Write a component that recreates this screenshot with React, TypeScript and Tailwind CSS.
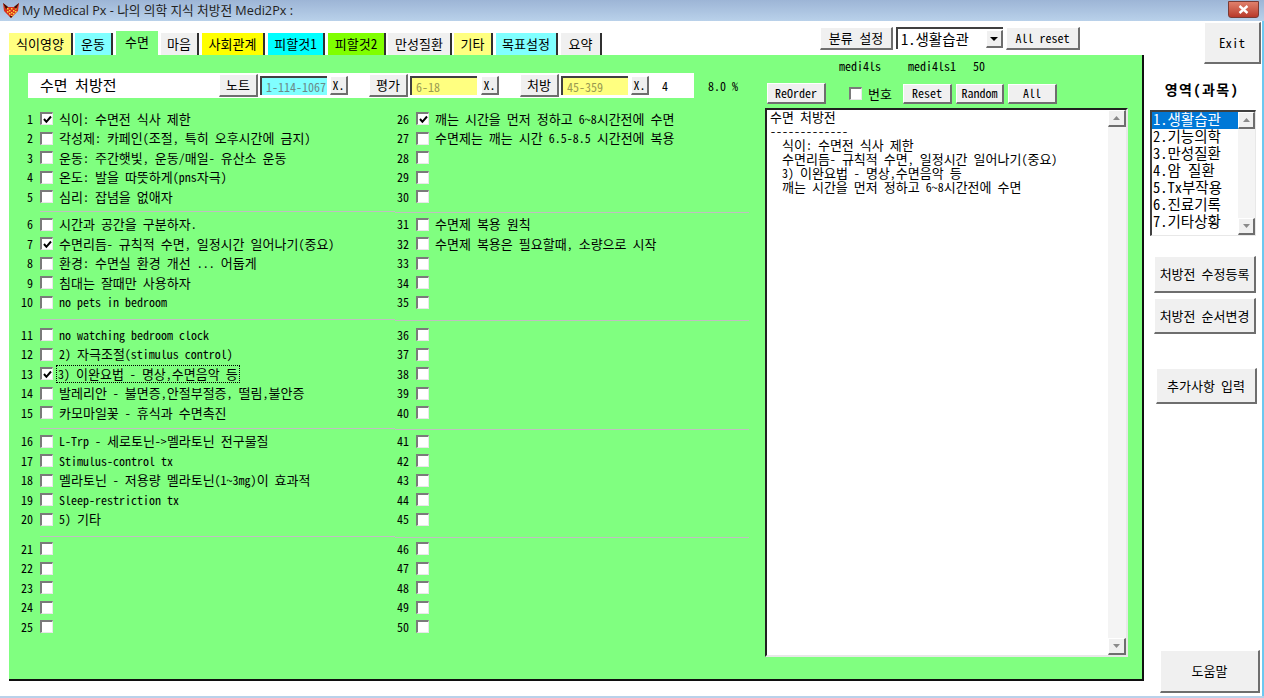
const raisedBtn =
  "flex items-center justify-center bg-[#f0f0f0] border-t border-l border-t-white border-l-white border-r-2 border-b-2 border-r-[#6e6e6e] border-b-[#6e6e6e] text-black";

const tabs = [
  { name: "식이영양", cls: "w-[64px] bg-[#ffff80] ml-0" },
  { name: "운동", cls: "w-[38px] bg-[#80ffff] ml-[2px]" },
  { name: "수면", cls: "w-[45px] bg-[#80ff80] ml-[2px] h-[25px] pb-[3px]", active: true },
  { name: "마음", cls: "w-[38px] bg-[#f0f0f0] ml-[1px]" },
  { name: "사회관계", cls: "w-[63px] bg-[#ffff00] ml-[3px]" },
  { name: "피할것1", cls: "w-[57px] bg-[#00ffff] ml-[3px]" },
  { name: "피할것2", cls: "w-[58px] bg-[#80ff00] ml-[3px]" },
  { name: "만성질환", cls: "w-[64px] bg-[#f0f0f0] ml-[2px]" },
  { name: "기타", cls: "w-[39px] bg-[#ffff80] ml-[2px]" },
  { name: "목표설정", cls: "w-[62px] bg-[#80ffff] ml-[3px]" },
  { name: "요약", cls: "w-[41px] bg-[#f0f0f0] ml-[3px]" },
];

const labels: Record<number, string> = {
  1: "식이: 수면전 식사 제한",
  2: "각성제: 카페인(조절, 특히 오후시간에 금지)",
  3: "운동: 주간햇빛, 운동/매일- 유산소 운동",
  4: "온도: 발을 따뜻하게(pns자극)",
  5: "심리: 잡념을 없애자",
  6: "시간과 공간을 구분하자.",
  7: "수면리듬- 규칙적 수면, 일정시간 일어나기(중요)",
  8: "환경: 수면실 환경 개선 ... 어둡게",
  9: "침대는 잘때만 사용하자",
  10: "no pets in bedroom",
  11: "no watching bedroom clock",
  12: "2) 자극조절(stimulus control)",
  13: "3) 이완요법 - 명상,수면음악 등",
  14: "발레리안 - 불면증,안절부절증, 떨림,불안증",
  15: "카모마일꽃 - 휴식과 수면촉진",
  16: "L-Trp - 세로토닌->멜라토닌 전구물질",
  17: "Stimulus-control tx",
  18: "멜라토닌 - 저용량 멜라토닌(1~3mg)이 효과적",
  19: "Sleep-restriction tx",
  20: "5) 기타",
  26: "깨는 시간을 먼저 정하고 6~8시간전에 수면",
  27: "수면제는 깨는 시간 6.5-8.5 시간전에 복용",
  31: "수면제 복용 원칙",
  32: "수면제 복용은 필요할때, 소량으로 시작",
};

const checked = [1, 7, 13, 26];

const groups = [
  { start: 1, sep: "mt-[4px] mb-[3px]" },
  { start: 6, sep: "mt-[7px] mb-[5px]" },
  { start: 11, sep: "mt-[5px] mb-[3px]" },
  { start: 16, sep: "mt-[7px] mb-[2px]" },
  { start: 21, sep: "" },
];

const listItems = ["1.생활습관", "2.기능의학", "3.만성질환", "4.암 질환", "5.Tx부작용", "6.진료기록", "7.기타상황"];

const noteLines = [
  "수면 처방전",
  "-------------",
  "  식이: 수면전 식사 제한",
  "  수면리듬- 규칙적 수면, 일정시간 일어나기(중요)",
  "  3) 이완요법 - 명상,수면음악 등",
  "  깨는 시간을 먼저 정하고 6~8시간전에 수면",
];

// hangul runs are a bit narrow in this font at 12px, the original is a 6/12 px grid
const T = ({ text }: { text: string }) => (
  <span>
    {text.split(/([가-힣]+)/).map((part, i) =>
      i % 2 ? <span key={i} className="text-[13px]">{part}</span> : part
    )}
  </span>
);

const foxDots = [
  [5, 6], [7, 8], [9, 6], [11, 8], [13, 6], [5, 9], [9, 10], [13, 9], [7, 11], [11, 11], [9, 13],
];

const Fox = () => (
  <svg width="18" height="17" viewBox="0 0 18 17">
    <path d="M1 1 L6 5 H12 L17 1 L16 9 L9 16 L2 9 Z" fill="#d8301c" />
    {foxDots.map(([x, y]) => (
      <rect key={`${x}-${y}`} x={x} y={y} width="1.5" height="1.5" fill="#ffd23c" />
    ))}
    <path d="M1 1 L6 5 L4 7 Z M17 1 L12 5 L14 7 Z M7.5 14 L9 16 L10.5 14 Z" fill="#3a1208" />
  </svg>
);

const Check = () => (
  <svg width="9" height="9" viewBox="0 0 9 9" className="block">
    <path d="M1 4 L3.4 6.8 L8 1.5" fill="none" stroke="#000" strokeWidth="2" />
  </svg>
);

const CheckBox = ({ on }: { on?: boolean }) => (
  <span className="w-[13px] h-[13px] shrink-0 flex items-center justify-center bg-white border-t-2 border-l-2 border-t-[#7a7a7a] border-l-[#7a7a7a] border-r border-b border-r-[#e8e8e8] border-b-[#e8e8e8]">
    {on && <Check />}
  </span>
);

const Arrow = ({ down }: { down?: boolean }) => (
  <svg width="7" height="4" viewBox="0 0 7 4">
    <path d={down ? "M0 0 H7 L3.5 4 Z" : "M0 4 H7 L3.5 0 Z"} fill="#8a8a8a" />
  </svg>
);

const Scrollbar = ({ cls }: { cls: string }) => (
  <div className={`flex flex-col justify-between bg-[#f4f4f4] shrink-0 ${cls}`}>
    <div className={`${raisedBtn} h-[17px]`}><Arrow /></div>
    <div className={`${raisedBtn} h-[17px]`}><Arrow down /></div>
  </div>
);

const Row = ({ n }: { n: number }) => (
  <div className="flex items-center h-[19.5px]">
    <span className="w-[24px] text-right">{n}</span>
    <span className="w-[7px]" />
    <CheckBox on={checked.includes(n)} />
    <span
      className={
        n === 13
          ? "ml-[4px] px-[1px] h-[16px] leading-[15px] whitespace-nowrap outline-1 outline-dotted outline-[#000]"
          : "ml-[6px] h-[16px] leading-[15px] whitespace-nowrap"
      }
    >
      {labels[n] && <T text={labels[n]} />}
    </span>
  </div>
);

const Field = ({ text, cls }: { text: string; cls: string }) => (
  <div className={`h-[19px] w-[67px] ml-[2px] pl-[4px] flex items-center whitespace-nowrap border-t-2 border-l-2 border-t-[#404040] border-l-[#404040] ${cls}`}>
    {text}
  </div>
);

export default function App() {
  return (
    <div className="w-[1264px] h-[698px] overflow-hidden flex flex-col bg-white text-[12px] text-black font-['Noto_Sans_Mono_CJK_KR','Noto_Sans_CJK_KR',monospace]">
      {/* title bar */}
      <div className="h-[21px] shrink-0 flex items-center bg-gradient-to-b from-[#9db5d6] to-[#b9d1ea] pl-[2px]">
        <Fox />
        <span className="ml-[2px] text-[12.7px] text-[#222] font-['Open_Sans','Noto_Sans_CJK_KR',sans-serif]">
          My Medical Px - 나의 의학 지식 처방전 Medi2Px :
        </span>
        <div className="ml-auto mr-[5px] mb-[3px] w-[31px] h-[17px] rounded-b-[3px] flex items-center justify-center bg-gradient-to-b from-[#e0806c] to-[#b8382a] border border-[#7a3a34]">
          <svg width="11" height="9" viewBox="0 0 11 9">
            <path d="M1.5 1 L9.5 8 M9.5 1 L1.5 8" stroke="#fff" strokeWidth="2.4" />
          </svg>
        </div>
      </div>

      <div className="flex flex-1 min-h-0">
        {/* left side */}
        <div className="w-[1144px] shrink-0 pl-[9px]">
          <div className="h-[34px] flex items-end">
            {tabs.map((t) => (
              <div
                key={t.name}
                className={`h-[22px] flex items-center justify-center text-[13px] whitespace-nowrap border-r-2 border-r-[#303030] ${t.cls} ${t.active ? "border-r-white border-l border-l-white border-t border-t-white" : ""}`}
              >
                {t.name}
              </div>
            ))}
            <div className="flex ml-[218px] mb-[5px] gap-[3px] items-start">
              <div className={`${raisedBtn} w-[73px] h-[23px] text-[13px]`}>분류 설정</div>
              <div className="w-[107px] h-[22px] flex items-center bg-white border-t-2 border-l-2 border-t-[#404040] border-l-[#404040] pl-[3px] text-[14.5px]">
                1.생활습관
                <div className={`${raisedBtn} ml-auto w-[17px] h-[18px]`}>
                  <svg width="8" height="4" viewBox="0 0 8 4"><path d="M0 0 H8 L4 4 Z" fill="#000" /></svg>
                </div>
              </div>
              <div className={`${raisedBtn} w-[74px] h-[23px]`}>All reset</div>
            </div>
          </div>

          {/* green panel */}
          <div className="h-[626px] flex bg-[#80ff80] border-r-2 border-b-2 border-r-[#101010] border-b-[#101010]">
            <div className="w-[756px] shrink-0">
              <div className="mt-[18px] flex items-center h-[25px]">
                <div className="ml-[19px] w-[666px] h-[25px] shrink-0 bg-white flex items-center pl-[12px]">
                  <span className="w-[179px] text-[15px]">수면 처방전</span>
                  <div className={`${raisedBtn} w-[39px] h-[23px] text-[13px]`}>노트</div>
                  <Field text="1-114-1067" cls="bg-[#80ffff] text-[#6a8a8a]" />
                  <div className={`${raisedBtn} w-[18px] h-[19px] ml-[3px]`}>X.</div>
                  <div className={`${raisedBtn} w-[39px] h-[23px] text-[13px] ml-[21px]`}>평가</div>
                  <Field text="6-18" cls="bg-[#ffff80] text-[#9a9a50]" />
                  <div className={`${raisedBtn} w-[18px] h-[19px] ml-[4px]`}>X.</div>
                  <div className={`${raisedBtn} w-[39px] h-[23px] text-[13px] ml-[21px]`}>처방</div>
                  <Field text="45-359" cls="bg-[#ffff80] text-[#9a9a50]" />
                  <div className={`${raisedBtn} w-[18px] h-[19px] ml-[3px]`}>X.</div>
                  <span className="ml-[13px]">4</span>
                </div>
                <span className="ml-[14px] whitespace-nowrap">8.0 %</span>
              </div>

              <div className="mt-[11px]">
                {groups.map((g) => (
                  <div key={g.start}>
                    <div className="grid grid-cols-[376px_370px]">
                      <div>{[0, 1, 2, 3, 4].map((i) => <Row key={i} n={g.start + i} />)}</div>
                      <div>{[0, 1, 2, 3, 4].map((i) => <Row key={i} n={g.start + 25 + i} />)}</div>
                    </div>
                    {g.sep && (
                      <div className={`flex ${g.sep}`}>
                        <div className="ml-[31px] w-[355px] h-px bg-[#c0c0c0]" />
                        <div className="w-[354px] h-px bg-[#c0c0c0] relative top-px" />
                      </div>
                    )}
                  </div>
                ))}
              </div>
            </div>

            <div className="flex-1 min-w-0">
              <div className="h-[28px] flex items-start pt-[2px] whitespace-nowrap">
                <span className="ml-[74px]">medi4ls</span>
                <span className="ml-[27px]">medi4ls1</span>
                <span className="ml-[17px]">50</span>
              </div>
              <div className="flex items-center h-[21px] ml-[2px]">
                <div className={`${raisedBtn} w-[59px] h-[21px]`}>ReOrder</div>
                <span className="ml-[23px]"><CheckBox /></span>
                <span className="ml-[6px] text-[13px]">번호</span>
                <div className={`${raisedBtn} w-[49px] h-[20px] ml-[11px]`}>Reset</div>
                <div className={`${raisedBtn} w-[48px] h-[20px] ml-[4px]`}>Random</div>
                <div className={`${raisedBtn} w-[49px] h-[20px] ml-[4px]`}>All</div>
              </div>
              <div className="mt-[4px] w-[363px] h-[549px] flex bg-white border-t-2 border-l-2 border-t-[#202020] border-l-[#202020] border-r-2 border-b-2 border-r-[#e8e8e8] border-b-[#e8e8e8]">
                <div className="flex-1 pl-[3px] whitespace-pre">
                  {noteLines.map((line) => (
                    <div key={line} className="h-[14px] leading-[14px]"><T text={line} /></div>
                  ))}
                </div>
                <Scrollbar cls="w-[18px]" />
              </div>
            </div>
          </div>
        </div>

        {/* right side */}
        <div className="flex-1 flex flex-col border-r-2 border-r-[#6cc8f0]">
          <div className={`${raisedBtn} shrink-0 w-[57px] h-[42px] ml-[60px] mt-px text-[13px]`}>Exit</div>
          <div className="mt-[15px] h-[20px] leading-[20px] text-center font-bold text-[14px] pr-[2px] tracking-[1.5px]">영역(과목)</div>
          <div className="mt-[11px] ml-[6px] w-[106px] h-[126px] shrink-0 flex bg-white border-t-2 border-l-2 border-t-[#404040] border-l-[#404040] border-r border-b border-r-[#e8e8e8] border-b-[#e8e8e8]">
            <div className="flex-1 text-[14.5px]">
              {listItems.map((it, i) => (
                <div key={it} className={`h-[17px] leading-[14px] pl-px ${i === 0 ? "bg-[#0078d7] text-white" : ""}`}>{it}</div>
              ))}
            </div>
            <Scrollbar cls="w-[17px]" />
          </div>
          <div className={`${raisedBtn} shrink-0 mt-[20px] ml-[10px] w-[102px] h-[37px] whitespace-nowrap`}><T text="처방전 수정등록" /></div>
          <div className={`${raisedBtn} shrink-0 mt-[5px] ml-[10px] w-[102px] h-[36px] whitespace-nowrap`}><T text="처방전 순서변경" /></div>
          <div className={`${raisedBtn} shrink-0 mt-[34px] ml-[12px] w-[101px] h-[36px] whitespace-nowrap`}><T text="추가사항 입력" /></div>
          <div className={`${raisedBtn} shrink-0 mt-[246px] ml-[16px] w-[100px] h-[43px] text-[13px]`}>도움말</div>
        </div>
      </div>
      <div className="h-[2px] shrink-0 bg-[#b9d1ea]" />
    </div>
  );
}
